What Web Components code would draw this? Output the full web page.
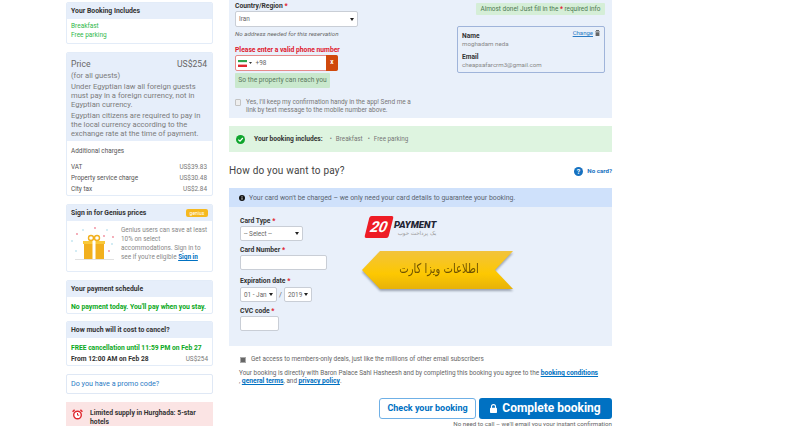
<!DOCTYPE html>
<html><head><meta charset="utf-8"><style>
html,body{margin:0;padding:0;background:#fff;height:426px;overflow:hidden}
body{font-family:Roboto,"Noto Sans",sans-serif;color:#333}
</style></head><body>
<x-page>
  <div slot="left">
    <x-card title-text="Your Booking Includes" style="margin-top:2px;height:42px">
      <div style="color:#2fb84a;font-size:6.5px;line-height:9.3px;padding-top:1px">Breakfast<br>Free parking</div>
    </x-card>
    <x-price></x-price>
    <x-genius></x-genius>
    <x-card title-text="Your payment schedule" style="margin-top:8px;height:34px">
      <div style="color:#0aa821;font-size:6.85px;font-weight:700;line-height:10px;padding-top:3px;white-space:nowrap">No payment today. You'll pay when you stay.</div>
    </x-card>
    <x-card title-text="How much will it cost to cancel?" style="margin-top:7px;height:45px">
      <div style="font-size:6.7px;font-weight:700;line-height:11px;padding-top:3px;white-space:nowrap"><div style="color:#0aa821">FREE cancellation until 11:59 PM on Feb 27</div><div style="display:flex;justify-content:space-between"><span>From 12:00 AM on Feb 28</span><span style="font-weight:400;color:#777;font-size:6.4px">US$254</span></div></div>
    </x-card>
    <x-promo></x-promo>
    <x-alert></x-alert>
  </div>
  <div slot="right">
    <x-guest></x-guest>
    <x-includes></x-includes>
    <x-pay></x-pay>
    <x-finish></x-finish>
  </div>
</x-page>
<script>
function def(name,html){customElements.define(name,class extends HTMLElement{constructor(){super();this.attachShadow({mode:'open'}).innerHTML=html}})}
def('x-page',`<style>:host{display:flex;gap:16px;padding-left:66px;width:734px;height:426px;overflow:hidden;box-sizing:border-box}
.l{width:147px;flex:none}.r{width:383px;flex:none}</style><div class="l"><slot name="left"></slot></div><div class="r"><slot name="right"></slot></div>`);
customElements.define('x-card',class extends HTMLElement{constructor(){super();this.attachShadow({mode:'open'}).innerHTML=`<style>:host{display:block;box-sizing:border-box;border:1px solid #e3ecf8;border-radius:2px;background:#fff;overflow:hidden}
.h{background:#e6eefa;height:16px;padding:0 4px;font-size:6.85px;font-weight:700;line-height:16px;color:#333;white-space:nowrap}
.b{padding:2px 4px 2px 4px}</style><div class="h"></div><div class="b"><slot></slot></div>`;this.shadowRoot.querySelector('.h').textContent=this.getAttribute('title-text')}});
def('x-price',`<style>:host{display:block;box-sizing:border-box;margin-top:8px;height:144px;border:1px solid #e3ecf8;border-radius:2px;background:#fff;overflow:hidden}
.top{background:#e6eefa;height:88px;box-sizing:border-box;padding:4px 5px 0 4px;color:#7b7b7b;font-size:7.6px;line-height:9px}
.p{display:flex;justify-content:space-between;font-size:8.6px;line-height:14px;color:#666}
p{margin:0}.g{margin-top:2px}
.low{padding:5px 5px 5px 4px;font-size:6.4px;color:#555}
.a{line-height:10px;margin-bottom:6px}.row{display:flex;justify-content:space-between;line-height:11px}.row span+span{color:#777}</style>
<div class="top"><div class="p"><span>Price</span><span>US$254</span></div><div>(for all guests)</div>
<p class="g">Under Egyptian law all foreign guests must pay in a foreign currency, not in Egyptian currency.</p><p class="g">Egyptian citizens are required to pay in the local currency according to the exchange rate at the time of payment.</p></div>
<div class="low"><div class="a">Additional charges</div><div class="row"><span>VAT</span><span>US$39.83</span></div><div class="row"><span>Property service charge</span><span>US$30.48</span></div><div class="row"><span>City tax</span><span>US$2.84</span></div></div>`);
def('x-genius',`<style>:host{display:block;box-sizing:border-box;margin-top:8px;height:68px;border:1px solid #e3ecf8;border-radius:2px;background:#fff;overflow:hidden}
.h{background:#e6eefa;height:16px;padding:0 5px 0 4px;display:flex;justify-content:space-between;align-items:center;font-size:6.85px;font-weight:700;color:#333}
.badge{background:#f6b91f;color:#fff;font-size:5px;font-weight:400;border-radius:2px;width:22px;height:8px;line-height:8px;text-align:center;margin-right:-1px}
.b{display:flex;padding:3px 5px 3px 4px;gap:5px}
.t{font-size:6.4px;line-height:9px;color:#888;padding-top:2px;white-space:nowrap}a{color:#0071c2;font-weight:700;text-decoration:underline}svg{flex:none}</style>
<div class="h"><span>Sign in for Genius prices</span><span class="badge">genius</span></div>
<div class="b"><svg width="45" height="40" viewBox="0 0 45 40"><g fill="#f08a9a"><circle cx="6" cy="10" r=".9"/><circle cx="24" cy="4" r=".9"/><circle cx="33" cy="12" r=".9"/><circle cx="42" cy="13" r=".9"/><circle cx="38" cy="27" r=".9"/></g><g fill="#9bd3e6"><circle cx="12" cy="6" r=".8"/><circle cx="36" cy="6" r=".8"/><circle cx="1" cy="17" r=".8"/><circle cx="5" cy="27" r=".8"/><circle cx="41" cy="20" r=".8"/></g><rect x="13" y="19" width="20" height="16" fill="#f2b01e"/><rect x="12" y="17" width="22" height="3" fill="#f9c93a"/><rect x="21.5" y="17" width="3" height="18" fill="#fff"/><circle cx="20" cy="14" r="2.5" fill="none" stroke="#f2b01e" stroke-width="1.4"/><circle cx="26" cy="14" r="2.5" fill="none" stroke="#f2b01e" stroke-width="1.4"/><path d="M4 35.5H43" stroke="#ccc" stroke-width=".6"/></svg>
<div class="t">Genius users can save at least<br>10% on select<br>accommodations. Sign in to<br>see if you're eligible <a>Sign in</a></div></div>`);
def('x-promo',`<style>:host{display:block;box-sizing:border-box;margin-top:8px;height:20px;border:1px solid #dfe8f5;border-radius:2px;background:#fff;padding:0 4px;font-size:7.2px;line-height:18px;color:#2a7bc4}</style>Do you have a promo code?`);
def('x-alert',`<style>:host{display:flex;box-sizing:border-box;margin-top:8px;height:40px;background:#fbe4e4;padding:7px 6px;gap:7px;font-size:6.8px;font-weight:700;line-height:9px;color:#333}svg{flex:none}</style>
<svg width="11" height="11" viewBox="0 0 11 11"><circle cx="5.5" cy="6" r="3.8" fill="#fff" stroke="#e0282e" stroke-width="1.4"/><path d="M5.5 4V6.2H7.2" fill="none" stroke="#e0282e"/><path d="M.6 2.8 2.6.8M10.4 2.8 8.4.8" stroke="#e0282e" stroke-width="1.5"/></svg>
<div style="width:110px">Limited supply in Hurghada: 5-star hotels</div>`);
def('x-select',`<style>:host{display:flex;box-sizing:border-box;align-items:center;justify-content:space-between;height:15px;background:#fff;border:1px solid #c9ced6;border-radius:2px;padding:0 3px;font-size:6.4px;color:#666;white-space:nowrap}
i{width:0;height:0;border:2px solid transparent;border-top:3px solid #222;border-bottom:0}</style><span><slot></slot></span><i></i>`);
def('x-label',`<style>:host{display:block;font-size:6.75px;font-weight:700;color:#333;line-height:10px;white-space:nowrap}b{color:#e0182d}</style><slot></slot> <b>*</b>`);
def('x-guest',`<style>:host{display:flex;justify-content:space-between;box-sizing:border-box;height:118px;background:#e9f0fa;padding:1px 7px 0 6px}
.f{width:212px;flex:none}x-select{width:123px;height:16px}
.it{font-style:italic;font-size:6.2px;color:#666;line-height:10px;margin-top:2px}
.err{font-size:6.75px;font-weight:700;color:#e0182d;line-height:10px;margin-top:6px}
.ph{display:flex;width:103px;height:16px;box-sizing:border-box;border:1px solid #e58b8b;border-radius:2px;background:#fff;align-items:center;font-size:6.4px;color:#666}
.ph span{flex:1;display:flex;align-items:center;gap:2px;padding-left:2px}.ph u{background:#d0490c;color:#fff;width:12px;height:16px;margin:0 -1px 0 0;text-align:center;text-decoration:none;font-weight:700;line-height:15px;border-radius:0 2px 2px 0}
.tip{background:#c9e8cd;color:#5b7a60;font-size:6.7px;line-height:15px;width:95px;text-align:center;margin-top:2px;border-radius:1px;white-space:nowrap}
.chk{display:flex;gap:5px;margin-top:10px;font-size:6.45px;line-height:8px;color:#777;width:176px}
.box{width:4px;height:5px;border:1px solid #c3c3c3;background:#eee;flex:none;margin-top:1px;border-radius:1px}
.side{width:148px;flex:none;display:flex;flex-direction:column;align-items:flex-end}
.al{background:#d5eed7;color:#4e7a52;font-size:6.45px;line-height:12px;width:129px;text-align:center;margin-top:2px;border-radius:1px}.al b{color:#e0182d}
.n{box-sizing:border-box;width:148px;height:47px;margin-top:11px;border:1px solid #9fb4da;border-radius:2px;padding:5px 4px;font-size:6.2px;line-height:8px;color:#888;position:relative}
.n b{color:#333;display:block;margin-top:0;font-size:6.6px}.n b+span+b{margin-top:5px}.n a{position:absolute;right:11px;top:2px;color:#2a7bc4;text-decoration:underline;font-size:6px}.n svg{position:absolute;right:4px;top:3px}</style>
<div class="f"><x-label>Country/Region</x-label><x-select>Iran</x-select><div class="it">No address needed for this reservation</div>
<div class="err">Please enter a valid phone number</div>
<div class="ph"><span><svg width="9" height="7" viewBox="0 0 9 7"><rect width="9" height="2.4" fill="#2ea24b"/><rect y="2.4" width="9" height="2.2" fill="#fff"/><rect y="4.6" width="9" height="2.4" fill="#e0282e"/></svg><svg width="3" height="2" viewBox="0 0 3 2"><path d="M0 0H3L1.5 2Z" fill="#333"/></svg>&nbsp;+98</span><u>x</u></div>
<div class="tip">So the property can reach you</div>
<div class="chk"><div class="box"></div><div>Yes, I'll keep my confirmation handy in the app! Send me a link by text message to the mobile number above.</div></div></div>
<div class="side"><div class="al">Almost done! Just fill in the <b>*</b> required info</div>
<div class="n"><a>Change</a><svg width="5" height="6" viewBox="0 0 5 6"><path d="M1 0H4V1H5V1.6H0V1H1ZM.6 2.2H4.4V6H.6Z" fill="#666"/></svg><b>Name</b><span>moghadam neda</span><b>Email</b><span>cheapsafarcrm3@gmail.com</span></div></div>`);
def('x-includes',`<style>:host{display:flex;align-items:center;box-sizing:border-box;margin-top:8px;height:26px;background:#def4e0;padding:0 7px;font-size:6.3px;color:#777;white-space:nowrap}
b{color:#333;margin:0 7px 0 9px;font-size:6.7px}span{margin-right:5px}i{font-style:normal;margin-right:4px}</style>
<svg width="9" height="9" viewBox="0 0 9 9"><circle cx="4.5" cy="4.5" r="4.5" fill="#0fa52d"/><path d="M2.3 4.6 4 6.2 6.8 3" fill="none" stroke="#fff" stroke-width="1.2"/></svg><b>Your booking includes:</b><span><i>•</i>Breakfast</span><span><i>•</i>Free parking</span>`);
def('x-pay',`<style>:host{display:block}
.hd{display:flex;justify-content:space-between;align-items:center;height:36px;font-size:10px;color:#444}
.nc{display:flex;align-items:center;gap:4px;font-size:6.2px;font-weight:700;color:#1671c0;padding-top:2px}
.bar{background:#cfe1fb;height:19px;box-sizing:border-box;padding:0 10px;display:flex;align-items:center;gap:4px;font-size:6.9px;color:#5a6470;white-space:nowrap}
.panel{background:#e9f0fa;height:139px;box-sizing:border-box;padding:9px 11px 0;display:flex;gap:38px}
.form{width:87px;flex:none}
x-select{width:63px}.inp{box-sizing:border-box;background:#fff;border:1px solid #c9ced6;border-radius:2px;height:15px}
.exp{display:flex;align-items:center;gap:2px;font-size:7px;color:#666;white-space:nowrap;margin-top:1px}
.logo{display:flex;gap:2px;align-items:flex-start;height:29px}
.mark{width:24px;height:22px;background:#ee1c25;transform:skewX(-14deg);color:#fff;font:italic 700 15px/22px Roboto,sans-serif;text-align:center;margin-left:2px;border-radius:2px}
.nm{font:italic 900 9.6px/11px Roboto,sans-serif;color:#1f2433;padding-top:3px;margin-left:1px}.nm small{display:block;font:400 5.5px/7px "DejaVu Sans",sans-serif;color:#999;text-align:right}
.ar{position:relative;width:152px;height:43px;margin-top:6px;margin-left:-3px;filter:drop-shadow(0 2px 1px rgba(60,70,90,.45))}
.ar svg{display:block}.ar span{position:absolute;left:36px;top:6px;width:82px;text-align:center;direction:rtl;font:10px/24px "DejaVu Sans",sans-serif;color:#6e5200;white-space:nowrap;transform:scaleY(1.35)}</style>
<div class="hd"><span style="letter-spacing:.2px">How do you want to pay?</span><span class="nc"><svg width="9" height="9" viewBox="0 0 9 9"><circle cx="4.5" cy="4.5" r="4.5" fill="#1671c0"/><text x="4.5" y="7" font-size="7" font-weight="700" text-anchor="middle" fill="#fff">?</text></svg>No card?</span></div>
<div class="bar"><svg width="6" height="6" viewBox="0 0 6 6"><circle cx="3" cy="3" r="3" fill="#111"/><path d="M3 2.4V4.8M3 1V1.8" stroke="#fff" stroke-width=".8"/></svg>Your card won't be charged – we only need your card details to guarantee your booking.</div>
<div class="panel"><div class="form">
<x-label>Card Type</x-label><x-select>-- Select --</x-select>
<x-label style="margin-top:4px">Card Number</x-label><div class="inp"></div>
<x-label style="margin-top:6px">Expiration date</x-label><div class="exp"><x-select style="width:37px">01 - Jan</x-select>/<x-select style="width:28px">2019</x-select></div>
<x-label style="margin-top:4px">CVC code</x-label><div class="inp" style="width:39px"></div></div>
<div><div class="logo"><div class="mark">20</div><div class="nm">PAYMENT<small>یک پرداخت خوب</small></div></div>
<div class="ar"><svg width="152" height="40" viewBox="0 0 152 40"><defs><linearGradient id="g" x1="0" y1="0" x2="0" y2="1"><stop offset="0" stop-color="#f2c33c"/><stop offset=".6" stop-color="#fdc801"/><stop offset="1" stop-color="#e7b209"/></linearGradient></defs><polygon points="0,19 18,0 151,0 133,19 151,38 18,38" fill="url(#g)"/></svg><span>اطلاعات ویزا کارت</span></div></div></div>`);
def('x-finish',`<style>:host{display:block;font-size:6.4px;color:#666}
.c{display:flex;align-items:center;gap:5px;margin:9px 0 0 11px;line-height:9px}
.box{width:4px;height:4px;background:#666;border:1px solid #aaa;flex:none}
.t{margin:5px 0 0 10px;line-height:8px;width:361px}a{color:#0071c2;font-weight:700;font-size:6.7px;text-decoration:underline}
.btns{display:flex;justify-content:flex-end;gap:3px;margin-top:13px}
.b1{box-sizing:border-box;width:97px;height:21px;border:1px solid #6fb0e6;border-radius:3px;color:#0071c2;background:#fff;font-weight:700;font-size:9px;line-height:19px;text-align:center}
.b2{box-sizing:border-box;width:133px;height:21px;border-radius:3px;background:#0071c2;color:#fff;font-weight:700;font-size:12px;line-height:21px;display:flex;align-items:center;justify-content:center;gap:5px}
.s{text-align:right;font-size:6.2px;margin-top:1px;white-space:nowrap}</style>
<div class="c"><div class="box"></div>Get access to members-only deals, just like the millions of other email subscribers</div>
<div class="t">Your booking is directly with Baron Palace Sahl Hasheesh and by completing this booking you agree to the <a>booking conditions</a> , <a>general terms</a>, and <a>privacy policy</a>.</div>
<div class="btns"><div class="b1">Check your booking</div><div class="b2"><svg width="7" height="9" viewBox="0 0 7 9"><path d="M1.5 4V2.6a2 2 0 0 1 4 0V4" fill="none" stroke="#fff" stroke-width="1.1"/><rect y="3.8" width="7" height="5.2" rx=".8" fill="#fff"/></svg>Complete booking</div></div>
<div class="s">No need to call – we'll email you your instant confirmation</div>`);
</script></body></html>
